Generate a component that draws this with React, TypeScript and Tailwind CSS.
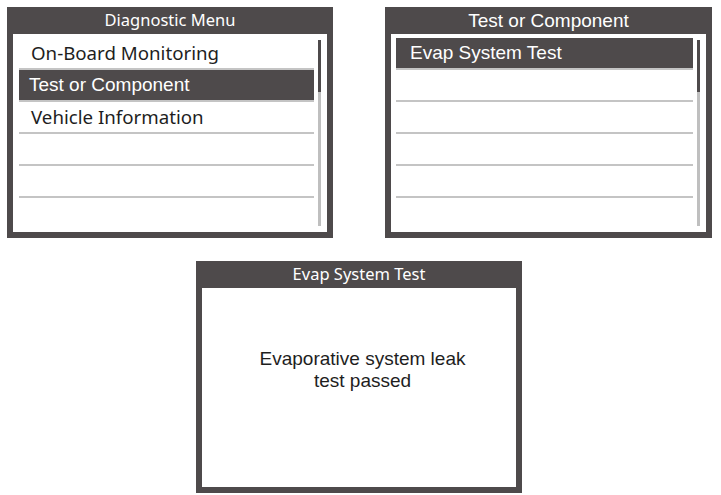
const dark = 'bg-[#4e4a4b]';

type Row = { label?: string; active?: boolean; font?: 'humanist' | 'arial'; pad?: string };

function Header({ title, font }: { title: string; font: 'humanist' | 'arial' }) {
  return (
    <div
      className={`h-[27px] flex items-center justify-center text-white leading-none ${
        font === 'arial' ? "font-['Liberation_Sans',Arial,sans-serif] text-[19px]" : "font-['Noto_Sans',sans-serif] text-[16.5px]"
      }`}
    >
      {title}
    </div>
  );
}

function Scrollbar() {
  return (
    <div className="w-[3px] mt-[6px] mb-[6px] bg-[#bfbfbf] flex flex-col">
      <div className={`h-[52px] ${dark}`} />
    </div>
  );
}

function MenuPanel({
  title,
  titleFont,
  rows,
  padL,
  width,
}: {
  title: string;
  titleFont: 'humanist' | 'arial';
  rows: Row[];
  padL: string;
  width: string;
}) {
  return (
    <div className={`${width} h-[231px] ${dark} px-[6px] pb-[6px] flex flex-col`}>
      <Header title={title} font={titleFont} />
      <div className={`flex-1 bg-white flex ${padL} pr-[6px]`}>
        <div className="flex-1 pt-[4px] flex flex-col">
          {rows.map((r, i) => (
            <div
              key={i}
              className={`h-[32px] flex items-center ${i < rows.length - 1 ? 'border-b-2 border-[#c4c4c4]' : ''} ${
                r.active ? `${dark} text-white` : 'text-[#1e1e1e]'
              } ${r.pad ?? ''} ${
                r.font === 'arial'
                  ? "font-['Liberation_Sans',Arial,sans-serif] text-[19px]"
                  : "font-['Noto_Sans',sans-serif] text-[18.7px]"
              }`}
            >
              {r.label}
            </div>
          ))}
        </div>
        <div className="w-[4px]" />
        <Scrollbar />
      </div>
    </div>
  );
}

export default function App() {
  return (
    <div className="w-[721px] h-[495px] bg-white overflow-hidden">
      <div className="flex pt-[7px] pl-[7px] gap-[52px]">
        <MenuPanel
          title="Diagnostic Menu"
          titleFont="humanist"
          width="w-[326px]"
          padL="pl-[6px]"
          rows={[
            { label: 'On-Board Monitoring', pad: 'pl-[12px]' },
            { label: 'Test or Component', active: true, font: 'arial', pad: 'pl-[10px]' },
            { label: 'Vehicle Information', pad: 'pl-[12px]' },
            {},
            {},
            {},
          ]}
        />
        <MenuPanel
          title="Test or Component"
          titleFont="arial"
          width="w-[327px]"
          padL="pl-[5px]"
          rows={[
            { label: 'Evap System Test', active: true, font: 'arial', pad: 'pl-[14px]' },
            {},
            {},
            {},
            {},
            {},
          ]}
        />
      </div>
      <div className="mt-[23px] ml-[196px]">
        <div className={`w-[326px] h-[232px] ${dark} px-[6px] pb-[6px] flex flex-col`}>
          <Header title="Evap System Test" font="humanist" />
          <div className="flex-1 bg-white pt-[60px] pl-[7px] text-center text-[19px] leading-[22px] text-[#1e1e1e] font-['Liberation_Sans',Arial,sans-serif]">
            <p>Evaporative system leak</p>
            <p>test passed</p>
          </div>
        </div>
      </div>
    </div>
  );
}
